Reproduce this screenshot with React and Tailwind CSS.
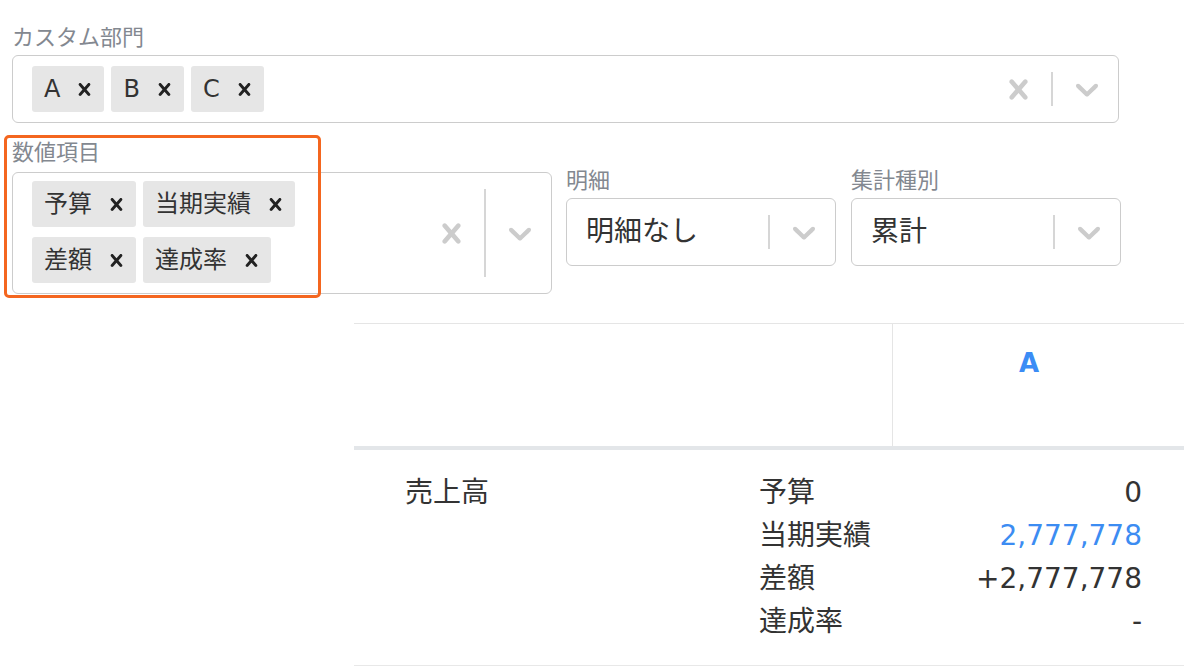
import React from "react";

const crossPath =
  "M14.348 14.849c-0.469 0.469-1.229 0.469-1.697 0l-2.651-3.030-2.651 3.029c-0.469 0.469-1.229 0.469-1.697 0-0.469-0.469-0.469-1.229 0-1.697l2.758-3.15-2.759-3.152c-0.469-0.469-0.469-1.228 0-1.697s1.228-0.469 1.697 0l2.652 3.031 2.651-3.031c0.469-0.469 1.228-0.469 1.697 0s0.469 1.229 0 1.697l-2.758 3.152 2.758 3.15c0.469 0.469 0.469 1.229 0 1.698z";
const chevronPath =
  "M4.516 7.548c0.436-0.446 1.043-0.481 1.576 0l3.908 3.747 3.908-3.747c0.533-0.481 1.141-0.446 1.574 0 0.436 0.445 0.408 1.197 0 1.615-0.406 0.418-4.695 4.502-4.695 4.502-0.217 0.223-0.502 0.335-0.787 0.335s-0.57-0.112-0.789-0.335c0 0-4.287-4.084-4.695-4.502s-0.436-1.17 0-1.615z";

function Cross({ className }) {
  return (
    <svg viewBox="0 0 20 20" fill="currentColor" className={className}>
      <path d={crossPath} />
    </svg>
  );
}

function Chevron({ className }) {
  return (
    <svg viewBox="0 0 20 20" fill="currentColor" className={className}>
      <path d={chevronPath} />
    </svg>
  );
}

function Chip({ label }) {
  return (
    <div className="flex items-center h-[46px] rounded-[3px] bg-[#e6e6e6] pl-[12px] pr-[7px] text-[24px] text-[#333]">
      <span className="leading-none">{label}</span>
      <Cross className="ml-[12px] w-[25px] h-[25px] text-[#222]" />
    </div>
  );
}

function Indicators({ clearable }) {
  return (
    <div className="flex items-stretch pr-[12px]">
      {clearable && (
        <div className="flex items-center mr-[13px]">
          <Cross className="w-[39px] h-[39px] text-[#cccccc]" />
        </div>
      )}
      <div className="w-[2px] my-[16px] bg-[#d6d6d6]" />
      <div className="flex items-center ml-[15px]">
        <Chevron className="w-[38px] h-[38px] text-[#cccccc]" />
      </div>
    </div>
  );
}

function MultiSelect({ values, className, padding, valuesWidth }) {
  return (
    <div className={`flex border border-[#cccccc] rounded-[6px] bg-white ${className}`}>
      <div className={`flex-1 pl-[19px] ${padding}`}>
        <div className={`flex flex-wrap content-start gap-x-[7px] gap-y-[10px] ${valuesWidth}`}>
          {values.map((v) => (
            <Chip key={v} label={v} />
          ))}
        </div>
      </div>
      <Indicators clearable />
    </div>
  );
}

function SingleSelect({ value }) {
  return (
    <div className="flex h-[68px] border border-[#cccccc] rounded-[6px] bg-white">
      <div className="flex-1 flex items-center pl-[19px] text-[28px] text-[#333]">{value}</div>
      <Indicators />
    </div>
  );
}

function Label({ children, className = "" }) {
  return (
    <div className={`text-[22px] leading-[30px] text-[#838890] ${className}`}>{children}</div>
  );
}

const rows = [
  { label: "予算", value: "0", color: "text-[#333]" },
  { label: "当期実績", value: "2,777,778", color: "text-[#3c8cf2]" },
  { label: "差額", value: "+2,777,778", color: "text-[#333]" },
  { label: "達成率", value: "-", color: "text-[#333]" },
];

export default function App() {
  return (
    <div className="relative w-[1184px] h-[672px] overflow-hidden bg-white font-['DejaVu_Sans','Noto_Sans_CJK_JP',sans-serif]">
      <div className="px-[12px] pt-[23px]">
        <Label className="mb-[2px]">カスタム部門</Label>
        <MultiSelect values={["A", "B", "C"]} className="w-[1107px]" padding="py-[10px]" valuesWidth="w-full" />

        <div className="flex items-center mt-[15px]">
          <div className="w-[540px]">
            <Label className="mb-[4px]">数値項目</Label>
            <MultiSelect
              values={["予算", "当期実績", "差額", "達成率"]}
              className="w-[540px] h-[122px]"
              padding="pt-[8px] pb-[9px]"
              valuesWidth="w-[290px]"
            />
          </div>
          <div className="w-[270px] ml-[14px]">
            <Label className="mb-[2px]">明細</Label>
            <SingleSelect value="明細なし" />
          </div>
          <div className="w-[270px] ml-[15px]">
            <Label className="mb-[2px]">集計種別</Label>
            <SingleSelect value="累計" />
          </div>
        </div>
      </div>

      {/* highlight box */}
      <div className="absolute left-[4px] top-[135px] w-[317px] h-[163px] border-[3px] border-[#f4661f] rounded-[5px]" />

      <div className="ml-[354px] mt-[29px] w-[830px] border-t border-[#e5e5e5]">
        <div className="flex h-[126px] border-b-4 border-[#e3e6e9]">
          <div className="w-[539px] border-r border-[#e5e5e5]" />
          <div className="w-[272px] flex justify-center pt-[20px] text-[26px] leading-[39px] font-bold text-[#3b8cf5]">
            A
          </div>
        </div>
        <div className="flex border-b border-[#e8e8e8] pt-[21px] pb-[22px] text-[28px] leading-[43px] text-[#333]">
          <div className="w-[405px] pl-[51px]">売上高</div>
          <div className="w-[134px] flex flex-col">
            {rows.map((r) => (
              <div key={r.label} className="whitespace-nowrap">{r.label}</div>
            ))}
          </div>
          <div className="w-[272px] flex flex-col items-end pr-[23px]">
            {rows.map((r) => (
              <div key={r.label} className={r.color}>{r.value}</div>
            ))}
          </div>
        </div>
      </div>
    </div>
  );
}
